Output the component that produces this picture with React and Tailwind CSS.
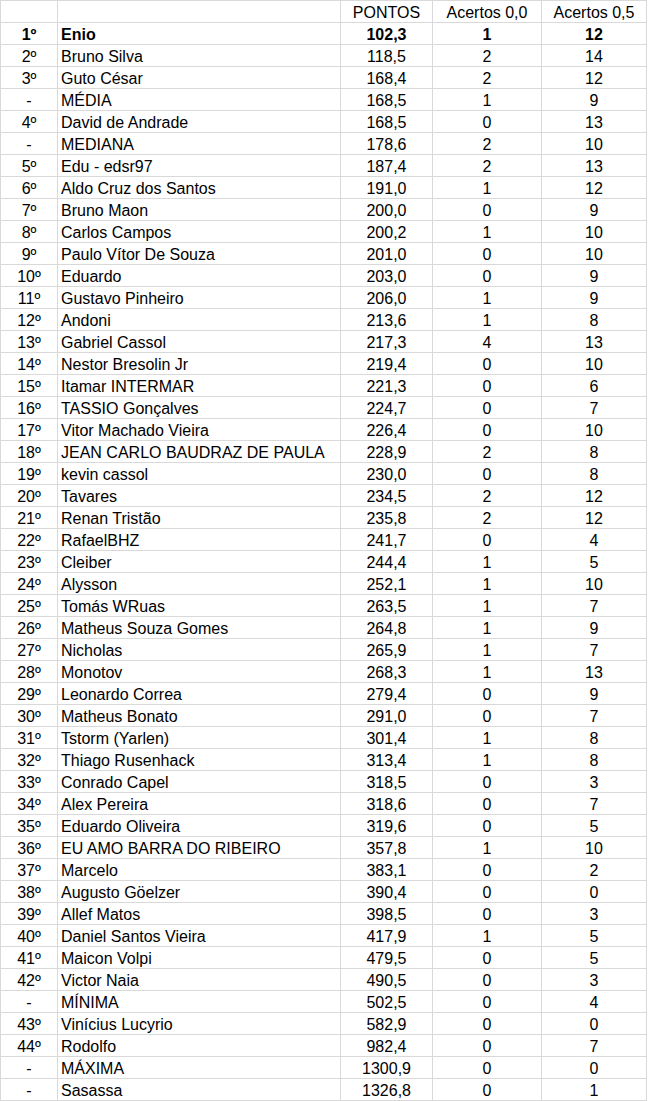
const rows = [
  ["1º", "Enio", "102,3", "1", "12"],
  ["2º", "Bruno Silva", "118,5", "2", "14"],
  ["3º", "Guto César", "168,4", "2", "12"],
  ["-", "MÉDIA", "168,5", "1", "9"],
  ["4º", "David de Andrade", "168,5", "0", "13"],
  ["-", "MEDIANA", "178,6", "2", "10"],
  ["5º", "Edu - edsr97", "187,4", "2", "13"],
  ["6º", "Aldo Cruz dos Santos", "191,0", "1", "12"],
  ["7º", "Bruno Maon", "200,0", "0", "9"],
  ["8º", "Carlos Campos", "200,2", "1", "10"],
  ["9º", "Paulo Vítor De Souza", "201,0", "0", "10"],
  ["10º", "Eduardo", "203,0", "0", "9"],
  ["11º", "Gustavo Pinheiro", "206,0", "1", "9"],
  ["12º", "Andoni", "213,6", "1", "8"],
  ["13º", "Gabriel Cassol", "217,3", "4", "13"],
  ["14º", "Nestor Bresolin Jr", "219,4", "0", "10"],
  ["15º", "Itamar INTERMAR", "221,3", "0", "6"],
  ["16º", "TASSIO Gonçalves", "224,7", "0", "7"],
  ["17º", "Vitor Machado Vieira", "226,4", "0", "10"],
  ["18º", "JEAN CARLO BAUDRAZ DE PAULA", "228,9", "2", "8"],
  ["19º", "kevin cassol", "230,0", "0", "8"],
  ["20º", "Tavares", "234,5", "2", "12"],
  ["21º", "Renan Tristão", "235,8", "2", "12"],
  ["22º", "RafaelBHZ", "241,7", "0", "4"],
  ["23º", "Cleiber", "244,4", "1", "5"],
  ["24º", "Alysson", "252,1", "1", "10"],
  ["25º", "Tomás WRuas", "263,5", "1", "7"],
  ["26º", "Matheus Souza Gomes", "264,8", "1", "9"],
  ["27º", "Nicholas", "265,9", "1", "7"],
  ["28º", "Monotov", "268,3", "1", "13"],
  ["29º", "Leonardo Correa", "279,4", "0", "9"],
  ["30º", "Matheus Bonato", "291,0", "0", "7"],
  ["31º", "Tstorm (Yarlen)", "301,4", "1", "8"],
  ["32º", "Thiago Rusenhack", "313,4", "1", "8"],
  ["33º", "Conrado Capel", "318,5", "0", "3"],
  ["34º", "Alex Pereira", "318,6", "0", "7"],
  ["35º", "Eduardo Oliveira", "319,6", "0", "5"],
  ["36º", "EU AMO BARRA DO RIBEIRO", "357,8", "1", "10"],
  ["37º", "Marcelo", "383,1", "0", "2"],
  ["38º", "Augusto Göelzer", "390,4", "0", "0"],
  ["39º", "Allef Matos", "398,5", "0", "3"],
  ["40º", "Daniel Santos Vieira", "417,9", "1", "5"],
  ["41º", "Maicon Volpi", "479,5", "0", "5"],
  ["42º", "Victor Naia", "490,5", "0", "3"],
  ["-", "MÍNIMA", "502,5", "0", "4"],
  ["43º", "Vinícius Lucyrio", "582,9", "0", "0"],
  ["44º", "Rodolfo", "982,4", "0", "7"],
  ["-", "MÁXIMA", "1300,9", "0", "0"],
  ["-", "Sasassa", "1326,8", "0", "1"],
];

const cell = "h-[22px] pt-[2px] border-r border-b border-[#d9d9d9] flex items-center leading-none whitespace-nowrap overflow-hidden";

function Row({ data, bold }) {
  const [pos, name, pts, a0, a5] = data;
  return (
    <div className={`grid grid-cols-[57px_283px_92px_109px_105px] ${bold ? "font-bold" : ""}`}>
      <div className={`${cell} justify-center`}>{pos}</div>
      <div className={`${cell} pl-[3px]`}>{name}</div>
      <div className={`${cell} justify-center`}>{pts}</div>
      <div className={`${cell} justify-center`}>{a0}</div>
      <div className={`${cell} justify-center`}>{a5}</div>
    </div>
  );
}

export default function App() {
  return (
    <div className="w-[648px] h-[1101px] bg-white text-black text-[16px] font-['Liberation_Sans',Arial,sans-serif]">
      <div className="w-[647px] border-l border-t border-[#d9d9d9]">
        <Row data={["", "", "PONTOS", "Acertos 0,0", "Acertos 0,5"]} />
        {rows.map((r, i) => (
          <Row key={i} data={r} bold={i === 0} />
        ))}
      </div>
    </div>
  );
}
